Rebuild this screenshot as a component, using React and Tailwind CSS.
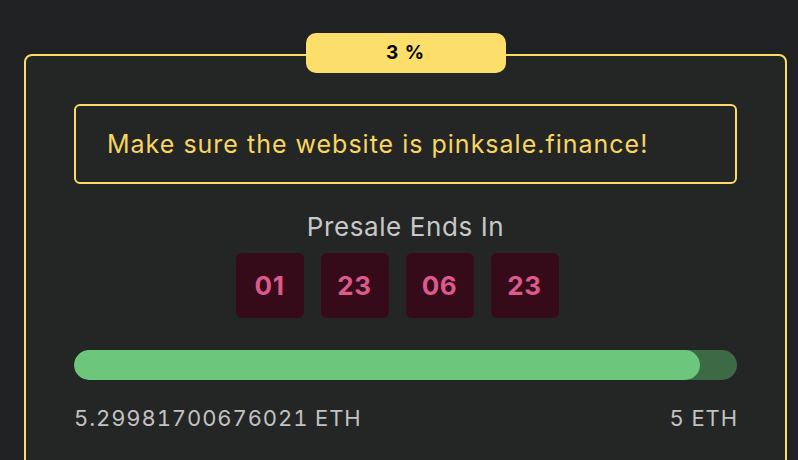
export default function App() {
  const countdown = ['01', '23', '06', '23']

  return (
    <div className="h-[460px] w-full overflow-hidden bg-[#202122] pt-[54px] pl-[24px] pr-[11px] font-['Inter',sans-serif]">
      <div className="relative h-[460px] rounded-lg border-2 border-[#fbdb67] bg-[#242525] px-[48px] pt-[48px]">
        {/* percent badge */}
        <div className="absolute left-1/2 top-[-23px] flex h-[40px] w-[200px] -translate-x-1/2 items-center justify-center rounded-[10px] bg-[#fcdf6a] text-[19px] font-bold tracking-[1px] text-black">
          3 %
        </div>

        <div className="flex h-[80px] items-center rounded-md border-2 border-[#fbdb67] pl-[31px]">
          <span className="pt-[1px] text-[25px] tracking-[1px] text-[#f8d65f]">Make sure the website is pinksale.finance!</span>
        </div>

        <div className="mt-[27px] flex flex-col items-center">
          <div className="text-[26px] leading-[32px] tracking-[0.6px] text-[#c8c8c8]">Presale Ends In</div>
          <div className="mt-[10px] flex">
            {countdown.map((v, i) => (
              <div
                key={i}
                className="mr-[17px] flex h-[65px] w-[68px] items-center justify-center rounded-md bg-[#360b19] text-[26px] font-bold tracking-wide text-[#dc5a8c]"
              >
                {v}
              </div>
            ))}
          </div>
        </div>

        <div className="mt-[32px] h-[30px] w-full overflow-hidden rounded-full bg-[#3e6945]">
          <div className="h-full rounded-full bg-[#6cc67c]" style={{ width: '94.4%' }} />
        </div>

        <div className="mt-[24px] flex justify-between text-[22px] leading-[28px] tracking-[0.9px] tabular-nums text-[#c2c2c2]">
          <span>5.29981700676021 ETH</span>
          <span className="mr-[-0.9px]">5 ETH</span>
        </div>
      </div>
    </div>
  )
}
